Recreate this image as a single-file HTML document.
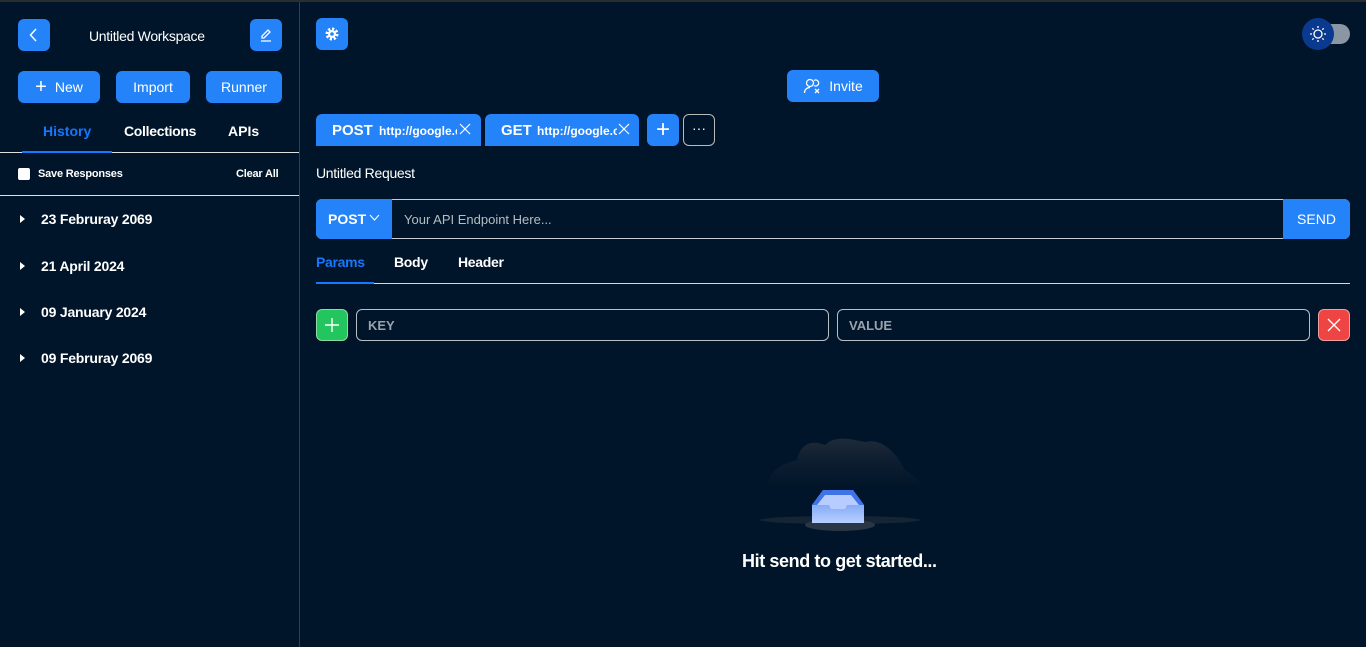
<!DOCTYPE html>
<html><head><meta charset="utf-8"><style>
*{box-sizing:border-box;margin:0;padding:0}
body{width:1366px;height:647px;overflow:hidden;background:#001529;font-family:"Liberation Sans",sans-serif;color:#fff;position:relative}
.top{position:absolute;left:0;top:0;width:1366px;height:2px;background:#2a2e33}
.side{position:absolute;left:0;top:2px;width:300px;height:645px;border-right:1px solid #2f3d4e;background:#001529}
.btn{position:absolute;background:#2483f9;border-radius:6px;color:#fff;font-size:14px;display:flex;align-items:center;justify-content:center}
.abs{position:absolute}
.t{position:absolute;font-size:14px;font-weight:bold;white-space:nowrap}
.hist{position:absolute;left:20px;font-size:14px;font-weight:bold;letter-spacing:-0.2px}
.hist:before{content:"";display:inline-block;border-left:5px solid #fff;border-top:4px solid transparent;border-bottom:4px solid transparent;margin-right:16px;vertical-align:1px}
.inp{position:absolute;border:1px solid #b8bec6;border-radius:6px;color:#9aa2ac;font-size:13px;font-weight:bold;padding-left:11px;display:flex;align-items:center}
</style></head><body>
<div class="top"></div>
<div class="side">
  <div class="btn" style="left:18px;top:17px;width:32px;height:32px"><svg width="14" height="14" viewBox="0 0 14 14"><path d="M9 1L3.5 7L9 13" stroke="#fff" stroke-width="1.5" fill="none"/></svg></div>
  <div class="t" style="left:89px;top:26px;font-weight:normal;letter-spacing:-0.3px">Untitled Workspace</div>
  <div class="btn" style="left:250px;top:17px;width:32px;height:32px"><svg width="16" height="16" viewBox="0 0 16 16"><path d="M4 11L4 9L10 3L12 5L6 11Z M3 14H13" stroke="#fff" stroke-width="1.3" fill="none"/></svg></div>
  <div class="btn" style="left:18px;top:69px;width:82px;height:32px"><span style="font-size:20px;margin-right:8px;font-weight:300">+</span>New</div>
  <div class="btn" style="left:116px;top:69px;width:74px;height:32px">Import</div>
  <div class="btn" style="left:206px;top:69px;width:76px;height:32px">Runner</div>
  <div class="t" style="left:43px;top:121px;color:#1677ff">History</div>
  <div class="t" style="left:124px;top:121px;letter-spacing:-0.3px">Collections</div>
  <div class="t" style="left:228px;top:121px">APIs</div>
  <div class="abs" style="left:0;top:150px;width:299px;height:1px;background:#e0e0e0"></div>
  <div class="abs" style="left:22px;top:149px;width:90px;height:2px;background:#1677ff"></div>
  <div class="abs" style="left:18px;top:166px;width:12px;height:12px;background:#fff;border-radius:2px"></div>
  <div class="t" style="left:38px;top:166px;font-size:11px;letter-spacing:-0.2px">Save Responses</div>
  <div class="t" style="left:236px;top:166px;font-size:11px;letter-spacing:-0.2px">Clear All</div>
  <div class="abs" style="left:0;top:193px;width:299px;height:1px;background:#e0e0e0"></div>
  <div class="hist" style="top:209px">23 Februray 2069</div>
  <div class="hist" style="top:256px">21 April 2024</div>
  <div class="hist" style="top:302px">09 January 2024</div>
  <div class="hist" style="top:348px">09 Februray 2069</div>
</div>
<div class="btn" style="left:316px;top:18px;width:32px;height:32px"><svg width="16" height="16" viewBox="0 0 16 16"><circle cx="8" cy="8" r="5" fill="none" stroke="#fff" stroke-width="3" stroke-dasharray="2.2 1.7"/><circle cx="8" cy="8" r="4" fill="#fff"/><circle cx="8" cy="8" r="1.8" fill="#2483f9"/></svg></div>
<div class="abs" style="left:1306px;top:24px;width:44px;height:20px;border-radius:10px;background:#8a96a3"></div>
<div class="abs" style="left:1302px;top:18px;width:32px;height:32px;border-radius:50%;background:#0a3a8f;display:flex;align-items:center;justify-content:center"><svg width="18" height="18" viewBox="0 0 18 18"><circle cx="9" cy="9" r="4" fill="none" stroke="#fff" stroke-width="1.3"/><g stroke="#fff" stroke-width="1.3"><path d="M9 1v2M9 15v2M1 9h2M15 9h2M3.3 3.3l1.4 1.4M13.3 13.3l1.4 1.4M3.3 14.7l1.4-1.4M13.3 4.7l1.4-1.4"/></g></svg></div>
<div class="btn" style="left:787px;top:70px;width:92px;height:32px"><svg width="18" height="18" viewBox="0 0 18 18" style="margin-right:8px"><circle cx="7" cy="6" r="3.5" fill="none" stroke="#fff" stroke-width="1.3"/><path d="M1.5 16c0-3.5 2.5-5.5 5.5-5.5M11 8.5a3 3 0 1 0 0-5M12 12l4 4M16 12l-4 4" stroke="#fff" stroke-width="1.3" fill="none"/></svg>Invite</div>
<div class="abs" style="left:316px;top:114px;width:165px;height:32px;background:#2483f9;border-radius:6px 6px 0 0"></div>
<div class="t" style="left:332px;top:122px;font-size:15px">POST</div>
<div class="t" style="left:379px;top:124px;font-size:12px;width:78px;overflow:hidden">http://google.com</div>
<svg class="abs" style="left:459px;top:123px" width="12" height="12"><path d="M1 1L11 11M11 1L1 11" stroke="#fff" stroke-width="1.2"/></svg>
<div class="abs" style="left:485px;top:114px;width:154px;height:32px;background:#2483f9;border-radius:6px 6px 0 0"></div>
<div class="t" style="left:501px;top:122px;font-size:15px">GET</div>
<div class="t" style="left:537px;top:124px;font-size:12px;width:80px;overflow:hidden">http://google.com</div>
<svg class="abs" style="left:618px;top:123px" width="12" height="12"><path d="M1 1L11 11M11 1L1 11" stroke="#fff" stroke-width="1.2"/></svg>
<div class="btn" style="left:647px;top:114px;width:32px;height:32px;font-size:24px;font-weight:300">+</div>
<div class="abs" style="left:683px;top:114px;width:32px;height:32px;border:1px solid #bbb;border-radius:6px;text-align:center;line-height:26px;font-size:14px">···</div>
<div class="t" style="left:316px;top:165px;font-weight:normal;font-size:14px;letter-spacing:-0.3px">Untitled Request</div>
<div class="abs" style="left:316px;top:199px;width:1034px;height:40px;border:1px solid #c8ccd2;border-radius:6px"></div>
<div class="abs" style="left:316px;top:199px;width:76px;height:40px;background:#2483f9;border-radius:6px 0 0 6px;font-size:14px;font-weight:bold;padding:12px 0 0 12px">POST</div>
<svg class="abs" style="left:369px;top:214px" width="11" height="8"><path d="M1 1L5.5 6L10 1" stroke="#fff" stroke-width="1.1" fill="none"/></svg>
<div class="abs" style="left:404px;top:212px;font-size:13px;color:#b6bcc4">Your API Endpoint Here...</div>
<div class="btn" style="left:1283px;top:199px;width:67px;height:40px;border-radius:0 6px 6px 0;font-size:14px">SEND</div>
<div class="t" style="left:316px;top:254px;color:#1677ff;font-size:14px;letter-spacing:-0.3px">Params</div>
<div class="t" style="left:394px;top:254px;font-size:14px;letter-spacing:-0.3px">Body</div>
<div class="t" style="left:458px;top:254px;font-size:14px;letter-spacing:-0.3px">Header</div>
<div class="abs" style="left:316px;top:283px;width:1034px;height:1px;background:#d8d8d8"></div>
<div class="abs" style="left:316px;top:282px;width:58px;height:2px;background:#1677ff"></div>
<div class="abs" style="left:316px;top:309px;width:32px;height:32px;background:#22c55e;border:1px solid #8fd9a8;border-radius:6px"></div>
<svg class="abs" style="left:324px;top:317px" width="16" height="16"><path d="M8 1V15M1 8H15" stroke="#fff" stroke-width="1.4"/></svg>
<div class="inp" style="left:356px;top:309px;width:473px;height:32px">KEY</div>
<div class="inp" style="left:837px;top:309px;width:473px;height:32px">VALUE</div>
<div class="abs" style="left:1318px;top:309px;width:32px;height:32px;background:#ef4444;border:1px solid #f0a0a0;border-radius:6px"></div>
<svg class="abs" style="left:1327px;top:318px" width="14" height="14"><path d="M1 1L13 13M13 1L1 13" stroke="#fff" stroke-width="1.3"/></svg>
<svg class="abs" style="left:755px;top:435px" width="170" height="100" viewBox="0 0 170 100">
<defs><linearGradient id="c" x1="0" y1="0" x2="0" y2="1"><stop offset="0" stop-color="#1f2b3a"/><stop offset="1" stop-color="#0a1a2d" stop-opacity="0.3"/></linearGradient>
<linearGradient id="b" x1="0" y1="0" x2="0" y2="1"><stop offset="0" stop-color="#5b8cf0"/><stop offset="1" stop-color="#b9d0ff"/></linearGradient></defs>
<path d="M13 50C13 35 30 28 42 25C45 10 55 4 70 10C80 0 95 4 110 7C125 3 140 15 150 35C158 40 165 45 165 50Z" fill="url(#c)"/>
<ellipse cx="85" cy="85" rx="80" ry="4" fill="#152536"/>
<ellipse cx="85" cy="90" rx="35" ry="6" fill="#2a3644"/>
<path d="M57 70L68 55H98L109 70V88H57Z" fill="url(#b)"/>
<path d="M57 70L68 55H98L109 70Z" fill="#3f74e8"/>
<path d="M62 70L70 60H96L104 70H92L90 74H76L74 70Z" fill="#b8cdff"/>
</svg>
<div class="t" style="left:742px;top:551px;font-size:18px;letter-spacing:-0.4px">Hit send to get started...</div>
</body></html>
